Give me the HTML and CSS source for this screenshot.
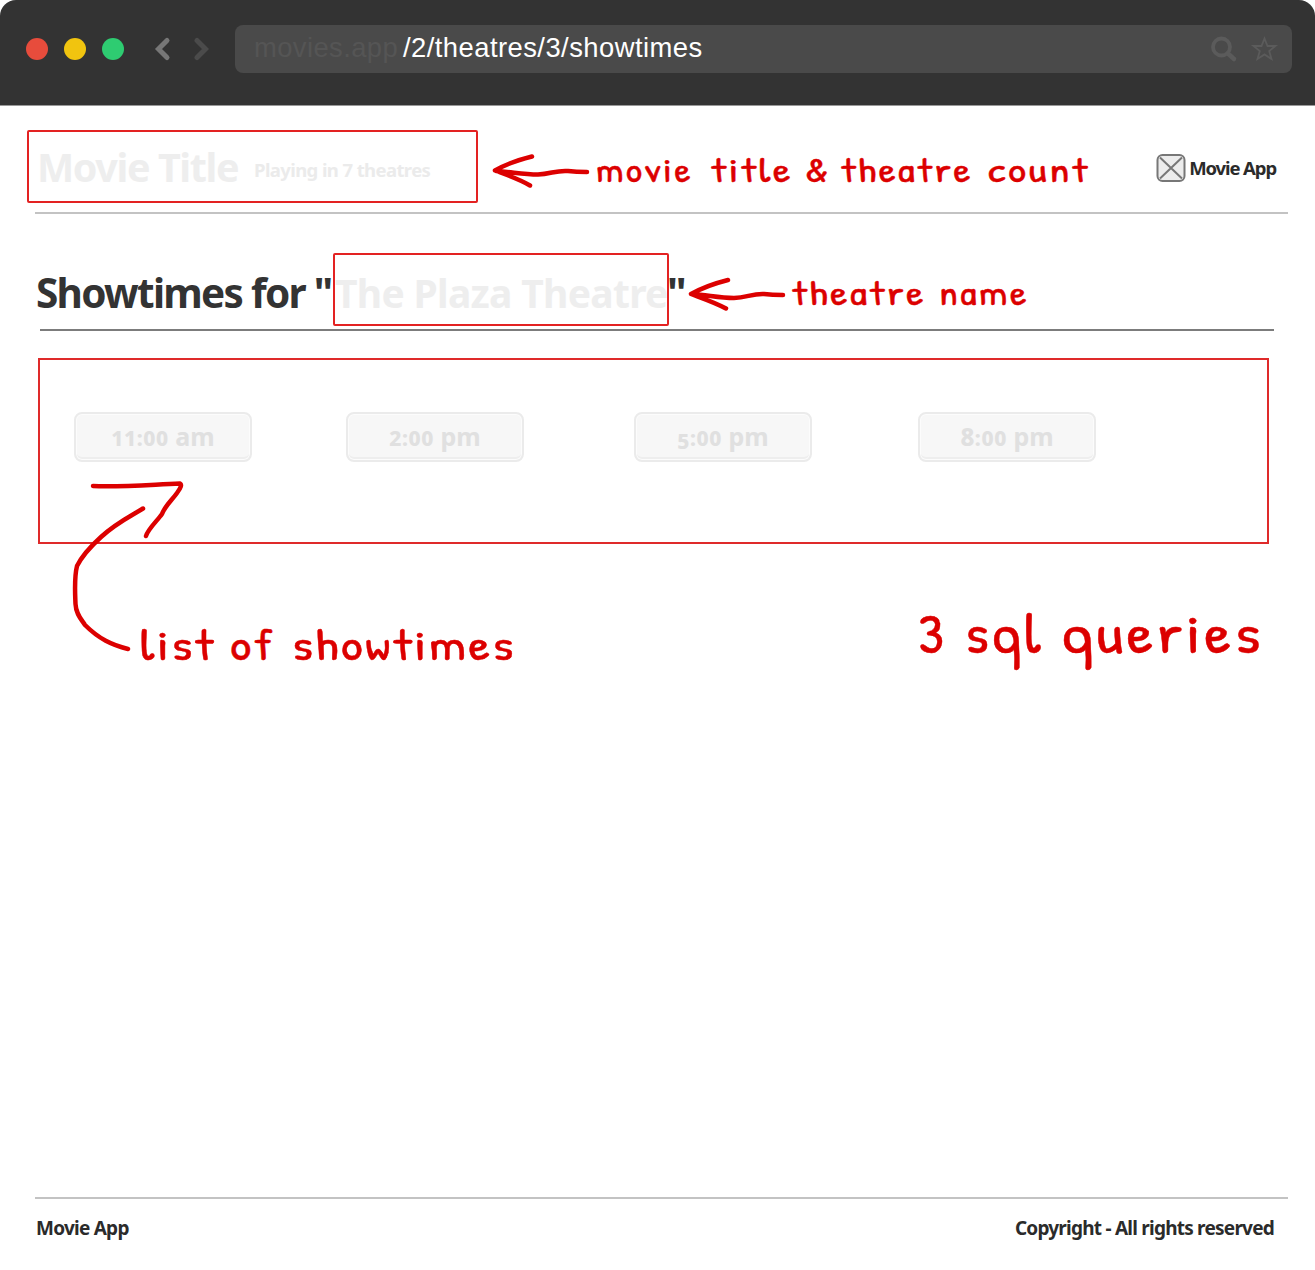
FILE: index.html
```html
<!DOCTYPE html>
<html lang="en">
<head>
<meta charset="utf-8">
<title>Showtimes</title>
<link rel="stylesheet" href="styles.css">
</head>
<body>
<div class="page">
  <header class="browser">
    <div class="lights"><i class="light red"></i><i class="light yellow"></i><i class="light green"></i></div>
    <svg class="arrows" width="56" height="26" viewBox="0 0 56 26" fill="none" stroke-width="5" stroke-linecap="round" stroke-linejoin="miter">
      <path d="M14 4.500 5.500 13l8.500 8.500" stroke="#777"/>
      <path d="M44 4.500 52.500 13l-8.500 8.500" stroke="#4b4b4b"/>
    </svg>
    <div class="address">
      <span class="host">movies.app</span><span class="path">/2/theatres/3/showtimes</span>
      <svg class="tools" width="70" height="30" viewBox="0 0 70 30" fill="none" stroke="#5b5b5b">
        <circle cx="12.500" cy="13" r="8.500" stroke-width="3.800"/>
        <path d="M19 19.500 25 25" stroke-width="4.500" stroke-linecap="round"/>
        <path d="M55.500 4.500 58.500 12h8l-6.300 5 2.300 8-7-4.600-7 4.600 2.300-8-6.300-5h8z" stroke-width="1.800"/>
      </svg>
    </div>
  </header>
  <div class="masthead">
    <div class="frame movie"><span class="title">Movie Title</span><span class="count">Playing in 7 theatres</span></div>
    <div class="brand">
      <svg width="30" height="30" viewBox="0 0 30 30" stroke="#777" stroke-width="2">
        <rect x="1.500" y="2" width="27" height="26" rx="5" fill="#ececec"/>
        <path d="M4 4.500 26 25.500M26 4.500 4 25.500"/>
      </svg>
      <span>Movie App</span>
    </div>
  </div>
  <div class="heading">
    <h1>Showtimes for "</h1>
    <div class="frame theatre">The Plaza Theatre</div>
    <span class="quote">"</span>
  </div>
  <main class="times">
    <div class="time"><span class="num">11:00</span> am</div>
    <div class="time"><span class="num">2:00</span> pm</div>
    <div class="time"><span class="num"><span class="low">5</span>:00</span> pm</div>
    <div class="time"><span class="num"><span class="tall">8</span>:00</span> pm</div>
  </main>
  <footer class="footer"><span class="foot-name">Movie App</span><span class="foot-copy">Copyright - All rights reserved</span></footer>

  <svg class="notes" width="1315" height="1270" viewBox="0 0 1315 1270">
    <g class="ink">
      <path d="M532 156.500C518 160 506 164 495 170.500C507 175 519 179 530 185.500M496 171C512 172 523 174.500 538 174.500C551 174 556 170 568 171C576 172 580 172 587 172"/>
      <path d="M728 280C714 283.500 702 288 691 294C703 298.500 715 302.500 726 308.500M692 294C708 295 719 298 734 298C747 297.500 752 293.500 764 294C772 295 776 295 783 295"/>
      <path d="M93 486C122 487 145 485 180 483.500Q183 485 177 493C172 500 165 506 162 514C157 521 148 529 146 536M143 508.500C131 516 116 523 101 537C90 547 81 558 77 566C74 578 75 591 75.500 604C76 614 81 619 85 625C99 639 112 645 128 649"/>
    </g>
    <g class="hand" font-size="34">
      <text x="596" y="182" textLength="97" lengthAdjust="spacingAndGlyphs">movie</text>
      <text x="711" y="182" textLength="82" lengthAdjust="spacingAndGlyphs">title</text>
      <text x="805" y="182" textLength="26" lengthAdjust="spacingAndGlyphs">&amp;</text>
      <text x="841" y="182" textLength="132" lengthAdjust="spacingAndGlyphs">theatre</text>
      <text x="988" y="182" textLength="102" lengthAdjust="spacingAndGlyphs">count</text>
      <text x="792" y="305" textLength="134" lengthAdjust="spacingAndGlyphs">theatre</text>
      <text x="939" y="305" textLength="90" lengthAdjust="spacingAndGlyphs">name</text>
    </g>
    <g class="hand" font-size="43">
      <text x="140" y="660" textLength="76" lengthAdjust="spacingAndGlyphs">list</text>
      <text x="230" y="660" textLength="45" lengthAdjust="spacingAndGlyphs">of</text>
      <text x="292" y="660" textLength="224" lengthAdjust="spacingAndGlyphs">showtimes</text>
    </g>
    <g class="hand large" font-size="56">
      <text x="918" y="653" textLength="29" lengthAdjust="spacingAndGlyphs">3</text>
      <text x="965" y="653" textLength="79" lengthAdjust="spacingAndGlyphs">sql</text>
      <text x="1062" y="653" textLength="202" lengthAdjust="spacingAndGlyphs">queries</text>
    </g>
  </svg>
</div>
</body>
</html>
```
FILE: styles.css
```css
* { box-sizing: border-box; }
body { margin: 0; background: #fff; font-family: "Noto Sans", "Open Sans", sans-serif; font-weight: 700; color: #2b2b2b; }
.page { position: relative; width: 1315px; height: 1270px; display: flex; flex-direction: column; overflow: hidden; white-space: nowrap; }
.browser { height: 106px; flex: none; background: #333; border-bottom: 1px solid #999; border-radius: 16px 16px 0 0; display: flex; align-items: flex-start; padding: 25px 23px 0 26px; }
.lights { display: flex; gap: 16px; padding-top: 13px; }
.light { width: 22px; height: 22px; border-radius: 50%; }
.red { background: #e74c3c; }
.yellow { background: #f1c40f; }
.green { background: #2ecc71; }
.arrows { margin: 11px 0 0 29px; }
.address { flex: 1; height: 48px; margin-left: 26px; border-radius: 8px; background: #4a4a4a; display: flex; align-items: center; padding: 0 13px 2px 19px; font: 400 27.4px "Liberation Sans", Arial, sans-serif; }
.host { width: 149px; color: #555; letter-spacing: .4px; }
.path { color: #fff; letter-spacing: .45px; }
.tools { margin: 2px 0 0 auto; }
.masthead { height: 84px; flex: none; margin: 24px 27px 0 35px; border-bottom: 2px solid #c3c3c3; display: flex; justify-content: space-between; align-items: flex-start; }
.frame { border: 2px solid #e32222; border-radius: 2px; }
.movie { width: 451px; height: 73px; margin-left: -8px; padding-left: 8px; display: flex; color: #eee; line-height: 70px; }
.title { width: 217px; font-size: 39.5px; letter-spacing: -1.4px; }
.count { font-size: 18.5px; line-height: 76px; letter-spacing: -.6px; color: #ebebeb; }
.brand { display: flex; align-items: center; gap: 3px; margin: 22px 12px 0 0; font-size: 18.5px; line-height: 30px; letter-spacing: -1.1px; }
.brand span { padding-top: 1px; }
.heading { height: 78px; flex: none; margin: 39px 41px 0 36px; display: flex; align-items: flex-start; background: linear-gradient(#7c7c7c, #7c7c7c) 4px 100% / 100% 2px no-repeat; color: #333; font-size: 39px; line-height: 76px; }
.heading h1 { width: 297px; margin: 0; font-size: 40.5px; line-height: 79px; letter-spacing: -1.7px; }
.theatre { width: 336px; height: 73px; color: #eee; letter-spacing: -.7px; }
.quote { margin-left: -2px; font-size: 41px; line-height: 79px; letter-spacing: -1px; }
.times { width: 1231px; height: 186px; flex: none; margin: 27px 0 0 38px; border: 2px solid #df2a2a; display: grid; grid-template-columns: 272px 288px 284px 179px; padding: 52px 0 0 34px; }
.time { width: 178px; height: 50px; border: 2px solid #ebebeb; border-radius: 8px; background: #f7f7f7; box-shadow: inset 0 0 0 1px #fcfcfc, inset 0 -3px 0 #eeeeee; color: #e0e0e0; font-size: 25px; line-height: 44px; text-align: center; }
.num { font-size: 21px; font-weight: 800; letter-spacing: .6px; }
.low { position: relative; top: 3px; }
.tall { font-size: 24px; }
.footer { margin: auto 27px 0 35px; height: 73px; flex: none; border-top: 2px solid #c3c3c3; display: flex; justify-content: space-between; padding: 14px 14px 0 1px; font-size: 19px; line-height: 30px; }
.foot-name { letter-spacing: -.75px; }
.foot-copy { letter-spacing: -.77px; }
.notes { position: absolute; inset: 0; pointer-events: none; }
.ink { fill: none; stroke: #dc0000; stroke-width: 4.500px; stroke-linecap: round; stroke-linejoin: round; }
.hand { fill: #dc0000; stroke: #dc0000; stroke-width: .4px; font-family: "Patrick Hand", "Comic Sans MS", "Noto Sans", sans-serif; font-weight: 400; letter-spacing: 2px; }
.large { letter-spacing: 3px; }
```
